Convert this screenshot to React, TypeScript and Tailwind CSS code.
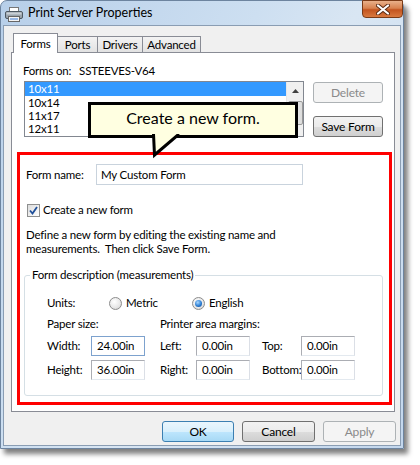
import React from "react";

const FONT = { fontFamily: 'Lato, "Noto Sans", "DejaVu Sans", sans-serif' };

function Button({
  children,
  w,
  disabled,
  focus,
}: {
  children: React.ReactNode;
  w: string;
  disabled?: boolean;
  focus?: boolean;
}) {
  const base =
    "h-[21px] flex items-center justify-center rounded-[3px] border text-[12px] leading-[14px]";
  const style = disabled
    ? "border-[#adb2b5] bg-[#f4f4f4] text-[#8a8a8a]"
    : focus
    ? "border-[#3c7fb1] bg-[linear-gradient(#eaf6fd_0%,#d9f0fc_50%,#bee6fd_51%,#a7d9f5_100%)] text-black"
    : "border-[#707070] bg-[linear-gradient(#f2f2f2_0%,#ebebeb_50%,#dddddd_51%,#cfcfcf_100%)] text-black";
  return <div className={`${base} ${style} ${w}`}>{children}</div>;
}

function TextBox({
  value,
  w,
  focus,
}: {
  value: string;
  w: string;
  focus?: boolean;
}) {
  return (
    <div
      className={`h-[20px] bg-white border flex items-center pl-[5px] leading-[14px] ${w} ${
        focus ? "border-[#7da2ce]" : "border-[#abadb3] border-b-[#e3e9ef] border-r-[#dbdfe6]"
      }`}
    >
      {value}
    </div>
  );
}

function Radio({ checked }: { checked?: boolean }) {
  return (
    <div className="w-[13px] h-[13px] rounded-full border border-[#8c8c8c] bg-[radial-gradient(circle_at_40%_35%,#ffffff_0%,#e6e6e6_60%,#c9c9c9_100%)] flex items-center justify-center">
      {checked && (
        <div className="w-[7px] h-[7px] rounded-full bg-[radial-gradient(circle_at_40%_35%,#a9d8ff_0%,#2c7ed3_55%,#0b3f8a_100%)]" />
      )}
    </div>
  );
}

function PrinterIcon() {
  return (
    <svg width="18" height="15" viewBox="0 0 18 15">
      <rect x="4.5" y="0.5" width="9" height="5" fill="#fff" stroke="#777" />
      <rect x="0.5" y="4.5" width="17" height="7" rx="1.5" fill="#9aa4ad" stroke="#4d5862" />
      <rect x="1.5" y="5.5" width="15" height="2" fill="#c9d0d6" />
      <rect x="3.5" y="9.5" width="11" height="5" fill="#f4f4f4" stroke="#666" />
      <rect x="5" y="11.5" width="8" height="1" fill="#3a7bd5" />
    </svg>
  );
}

export default function App() {
  return (
    <div
      className="w-[420px] h-[465px] bg-white text-black text-[11.5px] leading-[14px] tracking-[-0.2px]"
      style={FONT}
    >
      <div className="w-[404px] h-[449px] flex flex-col rounded-t-[7px] border border-[#6d849f] bg-[linear-gradient(120deg,#b7cfe9_0%,#cddff1_40%,#d9e6f3_55%,#c3d7ed_100%)] shadow-[4px_5px_5px_rgba(0,0,0,0.5)]">
        {/* title bar */}
        <div className="h-[24px] flex items-start shrink-0">
          <div className="ml-[4px] mt-[6px]">
            <PrinterIcon />
          </div>
          <div className="ml-[5px] mt-[4px] text-[12.5px] leading-[16px] tracking-[0px] text-black">
            Print Server Properties
          </div>
          <div className="ml-auto -mt-px w-[41px] h-[18px] rounded-b-[4px] border border-[#7a3a16] bg-[linear-gradient(#e9b08a_0%,#d8824f_45%,#c3541f_55%,#d9793f_100%)] flex items-center justify-center">
            <svg width="14" height="11" viewBox="0 0 14 11">
              <path d="M2 1.5 L12 9.5 M12 1.5 L2 9.5" stroke="#5a2a12" strokeWidth="4" strokeLinecap="round" />
              <path d="M2 1.5 L12 9.5 M12 1.5 L2 9.5" stroke="#ffffff" strokeWidth="2.2" strokeLinecap="round" />
            </svg>
          </div>
        </div>

        {/* client */}
        <div className="mx-[2px] mb-[2px] flex-1 border border-[#8a9db3] bg-[#f0f0f0] flex flex-col">
          {/* tabs */}
          <div className="mt-[7px] pl-[9px] flex items-end">
            <div className="relative z-10 w-[45px] h-[20px] -mb-px bg-white border border-b-0 border-[#898c95] flex items-center justify-center">
              Forms
            </div>
            <div className="w-[40px] h-[16px] border border-b-0 border-l-0 border-[#898c95] bg-[linear-gradient(#f3f3f3,#e2e2e2)] flex items-center justify-center">
              Ports
            </div>
            <div className="w-[45px] h-[16px] border border-b-0 border-l-0 border-[#898c95] bg-[linear-gradient(#f3f3f3,#e2e2e2)] flex items-center justify-center">
              Drivers
            </div>
            <div className="w-[58px] h-[16px] border border-b-0 border-l-0 border-[#898c95] bg-[linear-gradient(#f3f3f3,#e2e2e2)] flex items-center justify-center">
              Advanced
            </div>
          </div>

          {/* panel */}
          <div className="relative ml-[7px] w-[384px] h-[360px] border border-[#898c95] bg-white flex flex-col">
            <div className="mt-[11px] pl-[11px] flex">
              <span>Forms on:</span>
              <span className="ml-[8px]">SSTEEVES-V64</span>
            </div>

            <div className="mt-[3px] pl-[12px] flex items-start">
              <div className="w-[280px] h-[56px] border border-[#828790] flex overflow-hidden">
                <div className="flex-1 flex flex-col">
                  <div className="h-[14px] bg-[#3399ff] text-white pl-[3px] leading-[14px]">10x11</div>
                  <div className="h-[13px] pl-[3px] leading-[13px]">10x14</div>
                  <div className="h-[13px] pl-[3px] leading-[13px]">11x17</div>
                  <div className="h-[13px] pl-[3px] leading-[13px]">12x11</div>
                </div>
                <div className="w-[17px] bg-[#f0f0f0] border-l border-[#e6e6e6] flex flex-col items-center">
                  <div className="h-[17px] flex items-center justify-center">
                    <svg width="7" height="4" viewBox="0 0 7 4">
                      <path d="M0 4 L3.5 0 L7 4 Z" fill="#404040" />
                    </svg>
                  </div>
                  <div className="mt-[2px] w-[15px] h-[24px] rounded-[2px] border border-[#9a9a9a] bg-[linear-gradient(90deg,#f4f4f4,#dcdcdc)]" />
                </div>
              </div>
              <div className="ml-[9px] mt-[1px] flex flex-col gap-[13px]">
                <Button w="w-[70px]" disabled>
                  Delete
                </Button>
                <Button w="w-[70px]">Save Form</Button>
              </div>
            </div>

            {/* red highlight */}
            <div className="mt-[15px] ml-[5px] w-[375px] h-[253px] border-[3px] border-[#ff0000] flex flex-col">
              <div className="mt-[9px] pl-[6px] flex items-center">
                <span className="w-[70px]">Form name:</span>
                <div className="w-[207px] h-[21px] border border-[#c9d3dd] bg-white flex items-center pl-[4px]">
                  My Custom Form
                </div>
              </div>

              <div className="mt-[18px] pl-[7px] flex items-center">
                <div className="w-[13px] h-[13px] border border-[#8e8f8f] bg-[linear-gradient(135deg,#dcdcdc,#ffffff)] flex items-center justify-center">
                  <svg width="9" height="9" viewBox="0 0 9 9">
                    <path d="M1 4.5 L3.5 7.5 L8 1" stroke="#1f4f9a" strokeWidth="1.8" fill="none" />
                  </svg>
                </div>
                <span className="ml-[3px]">Create a new form</span>
              </div>

              <div className="mt-[11px] pl-[6px] leading-[14px]">
                <div>Define a new form by editing the existing name and</div>
                <div>measurements.&nbsp; Then click Save Form.</div>
              </div>

              <fieldset className="mt-[12px] ml-[4px] w-[359px] h-[128px] border border-[#d5dfe5] rounded-[3px]">
                <legend className="ml-[5px] px-[2px] leading-[14px]">Form description (measurements)</legend>
                <div className="mt-[14px] pl-[22px] flex items-center">
                  <span className="w-[62px]">Units:</span>
                  <div className="w-[83px] flex items-center">
                    <Radio />
                    <span className="ml-[4px]">Metric</span>
                  </div>
                  <div className="flex items-center">
                    <Radio checked />
                    <span className="ml-[4px]">English</span>
                  </div>
                </div>
                <div className="mt-[7px] pl-[22px] flex">
                  <span className="w-[113px]">Paper size:</span>
                  <span>Printer area margins:</span>
                </div>
                <div className="mt-[5px] pl-[22px] flex items-center">
                  <span className="w-[44px]">Width:</span>
                  <TextBox value="24.00in" w="w-[54px]" focus />
                  <span className="ml-[15px] w-[36px]">Left:</span>
                  <TextBox value="0.00in" w="w-[54px]" />
                  <span className="ml-[12px] w-[39px]">Top:</span>
                  <TextBox value="0.00in" w="w-[54px]" />
                </div>
                <div className="mt-[4px] pl-[22px] flex items-center">
                  <span className="w-[44px]">Height:</span>
                  <TextBox value="36.00in" w="w-[54px]" />
                  <span className="ml-[15px] w-[36px]">Right:</span>
                  <TextBox value="0.00in" w="w-[54px]" />
                  <span className="ml-[12px] w-[39px]">Bottom:</span>
                  <TextBox value="0.00in" w="w-[54px]" />
                </div>
              </fieldset>
            </div>

            {/* callout */}
            <div className="absolute left-[76px] top-[49px] w-[210px] h-[36px] border-[3px] border-black bg-[#ffffe1] flex justify-center pt-[3px] text-[16px] leading-[20px] tracking-[0px] z-20">
              Create a new form.
            </div>
            <svg
              className="absolute left-[136px] top-[81px] z-30"
              width="36"
              height="25"
              viewBox="0 0 36 25"
            >
              <polygon points="5.5,0 6.5,21 31,0" fill="#ffffe1" />
              <polyline points="5.5,0 6.5,21 31,0" fill="none" stroke="#000" strokeWidth="3" strokeLinejoin="miter" />
            </svg>
          </div>

          {/* bottom buttons */}
          <div className="mt-[9px] pr-[4px] flex justify-end gap-[8px]">
            <Button w="w-[72px]" focus>
              OK
            </Button>
            <Button w="w-[73px]">Cancel</Button>
            <Button w="w-[73px]" disabled>
              Apply
            </Button>
          </div>
        </div>
      </div>
    </div>
  );
}
